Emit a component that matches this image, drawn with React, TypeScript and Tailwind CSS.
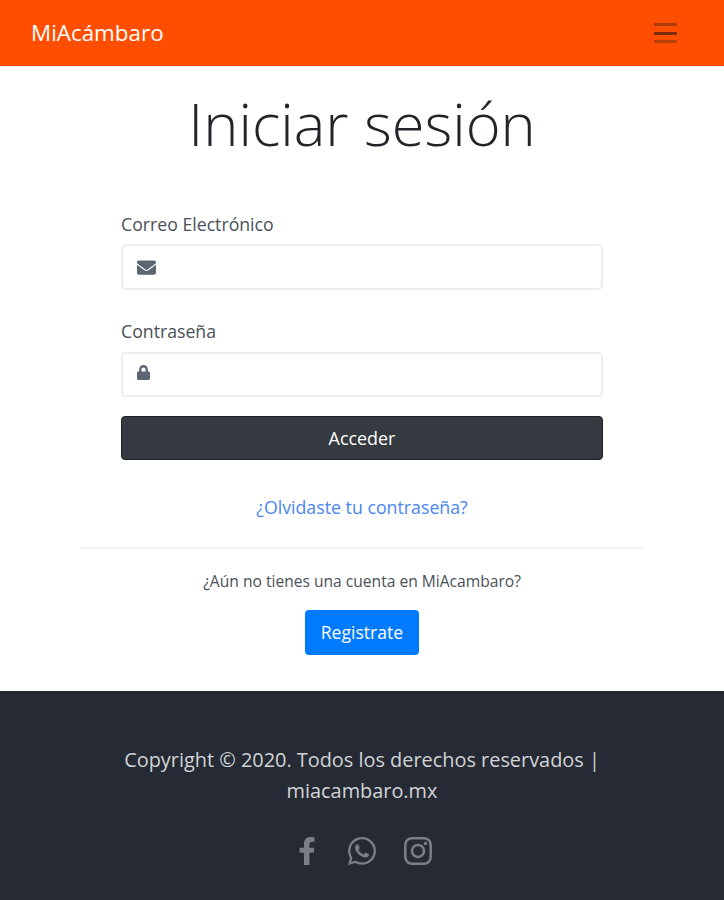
import React from 'react';
import { FaEnvelope, FaLock, FaFacebookF, FaWhatsapp, FaInstagram } from 'react-icons/fa';

export default function App() {
  return (
    <div className="min-h-[900px] bg-white flex flex-col font-['Open_Sans',sans-serif] overflow-hidden">
      {/* Navbar */}
      <nav className="h-[66px] bg-[#ff4e00] flex items-center justify-between pl-[31px] pr-[47px]">
        <a className="text-[22.4px] font-medium text-white">MiAcámbaro</a>
        <div className="w-[23px] flex flex-col">
          <span className="h-[3px] bg-[#ad3d0a]" />
          <span className="mt-[6px] h-[3px] bg-[#7d2c08]" />
          <span className="mt-[5px] h-[3px] bg-[#b5420a]" />
        </div>
      </nav>

      <main className="flex-1 flex flex-col items-center">
        <h1 className="mt-[14px] text-[59.6px] leading-[86px] font-light text-[#212529]">Iniciar sesión</h1>

        <form className="w-[482px] mt-[46px]">
          <label className="block text-[17.7px] leading-[24px] text-[#495057]">Correo Electrónico</label>
          <div className="mt-[8px] h-[46px] border-2 border-[#eceded] rounded-[5px] flex items-center pl-[14px]">
            <FaEnvelope className="w-[19px] h-[19px] text-[#5a6672]" />
          </div>
          <label className="block mt-[29px] text-[17.7px] leading-[24px] text-[#495057]">Contraseña</label>
          <div className="mt-[9px] h-[45px] border-2 border-[#eceded] rounded-[5px] flex items-center pl-[14px]">
            <FaLock className="w-[13px] h-[15px] mb-[4px] text-[#5a6672]" />
          </div>
          <button type="button" className="mt-[19px] w-full h-[44px] bg-[#343a40] border border-[#1d2124] rounded-[4px] text-white text-[17.9px] font-medium">Acceder</button>
        </form>

        <a className="mt-[35px] text-[17.75px] leading-[24px] text-[#4a86f0]">¿Olvidaste tu contraseña?</a>
        <hr className="mt-[28px] w-[564px] border-t-2 border-[#f3f3f3]" />
        <p className="mt-[21px] text-[15.6px] leading-[22px] text-[#495057]">¿Aún no tienes una cuenta en MiAcambaro?</p>
        <button type="button" className="mt-[18px] w-[114px] h-[45px] bg-[#007bff] rounded-[4px] text-white text-[17.6px] font-medium">Registrate</button>
      </main>

      {/* Footer */}
      <footer className="h-[209px] bg-[#252a34] flex flex-col items-center pt-[53px]">
        <p className="w-[520px] text-center text-[19.9px] leading-[31px] font-medium text-[#d2d4d6]">Copyright © 2020. Todos los derechos reservados | miacambaro.mx</p>
        <div className="mt-[29px] flex items-center gap-[24px] text-[#7b7e84]">
          <div className="w-[32px] flex justify-center">
            <FaFacebookF className="w-[28px] h-[28px] ml-[2px]" />
          </div>
          <div className="w-[32px] flex justify-center">
            <FaWhatsapp className="w-[32px] h-[32px]" />
          </div>
          <div className="w-[32px] flex justify-center">
            <FaInstagram className="w-[32px] h-[32px]" />
          </div>
        </div>
      </footer>
    </div>
  );
}
